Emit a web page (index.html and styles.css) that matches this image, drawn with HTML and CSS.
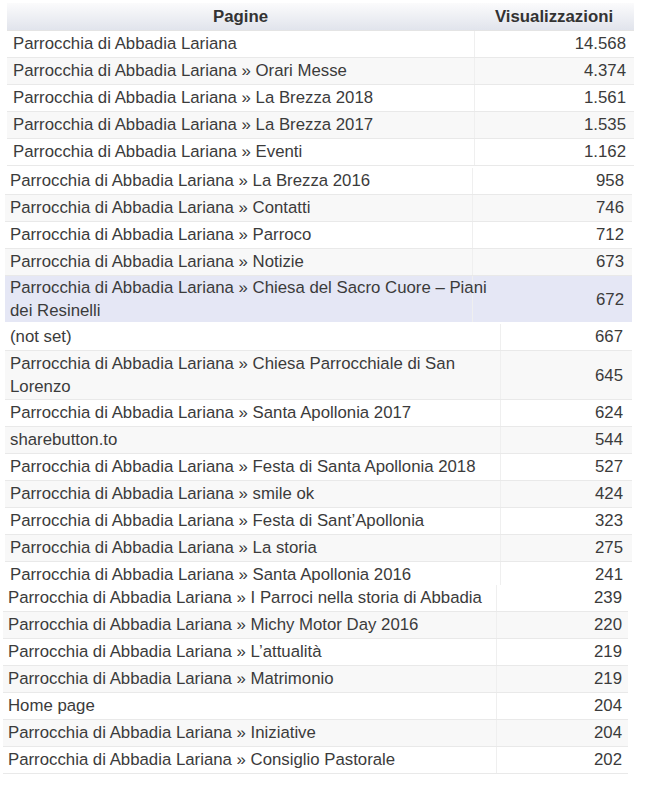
FILE: index.html
```html
<!DOCTYPE html>
<html lang="it">
<head>
<meta charset="utf-8">
<title>Pagine più visualizzate</title>
<link rel="stylesheet" href="styles.css">
</head>
<body>
<div class="page">
  <table class="t t1">
    <thead>
      <tr><th class="name">Pagine</th><th class="num">Visualizzazioni</th></tr>
    </thead>
    <tbody>
      <tr><td class="name">Parrocchia di Abbadia Lariana</td><td class="num">14.568</td></tr>
      <tr><td class="name">Parrocchia di Abbadia Lariana » Orari Messe</td><td class="num">4.374</td></tr>
      <tr><td class="name">Parrocchia di Abbadia Lariana » La Brezza 2018</td><td class="num">1.561</td></tr>
      <tr><td class="name">Parrocchia di Abbadia Lariana » La Brezza 2017</td><td class="num">1.535</td></tr>
      <tr><td class="name">Parrocchia di Abbadia Lariana » Eventi</td><td class="num">1.162</td></tr>
    </tbody>
  </table>
  <div class="clip2">
  <table class="t t2">
    <tbody>
      <tr><td class="name">Parrocchia di Abbadia Lariana » La Brezza 2016</td><td class="num">958</td></tr>
      <tr><td class="name">Parrocchia di Abbadia Lariana » Contatti</td><td class="num">746</td></tr>
      <tr><td class="name">Parrocchia di Abbadia Lariana » Parroco</td><td class="num">712</td></tr>
      <tr><td class="name">Parrocchia di Abbadia Lariana » Notizie</td><td class="num">673</td></tr>
      <tr class="hl"><td class="name">Parrocchia di Abbadia Lariana » Chiesa del Sacro Cuore – Piani<br>dei Resinelli</td><td class="num">672</td></tr>
    </tbody>
  </table>
  </div>
  <div class="clip3">
  <table class="t t3">
    <tbody>
      <tr><td class="name">(not set)</td><td class="num">667</td></tr>
      <tr class="two"><td class="name">Parrocchia di Abbadia Lariana » Chiesa Parrocchiale di San<br>Lorenzo</td><td class="num">645</td></tr>
      <tr><td class="name">Parrocchia di Abbadia Lariana » Santa Apollonia 2017</td><td class="num">624</td></tr>
      <tr><td class="name">sharebutton.to</td><td class="num">544</td></tr>
      <tr><td class="name">Parrocchia di Abbadia Lariana » Festa di Santa Apollonia 2018</td><td class="num">527</td></tr>
      <tr><td class="name">Parrocchia di Abbadia Lariana » smile ok</td><td class="num">424</td></tr>
      <tr><td class="name">Parrocchia di Abbadia Lariana » Festa di Sant’Apollonia</td><td class="num">323</td></tr>
      <tr><td class="name">Parrocchia di Abbadia Lariana » La storia</td><td class="num">275</td></tr>
      <tr><td class="name">Parrocchia di Abbadia Lariana » Santa Apollonia 2016</td><td class="num">241</td></tr>
    </tbody>
  </table>
  </div>
  <table class="t t4">
    <tbody>
      <tr><td class="name">Parrocchia di Abbadia Lariana » I Parroci nella storia di Abbadia</td><td class="num">239</td></tr>
      <tr><td class="name">Parrocchia di Abbadia Lariana » Michy Motor Day 2016</td><td class="num">220</td></tr>
      <tr><td class="name">Parrocchia di Abbadia Lariana » L’attualità</td><td class="num">219</td></tr>
      <tr><td class="name">Parrocchia di Abbadia Lariana » Matrimonio</td><td class="num">219</td></tr>
      <tr><td class="name">Home page</td><td class="num">204</td></tr>
      <tr><td class="name">Parrocchia di Abbadia Lariana » Iniziative</td><td class="num">204</td></tr>
      <tr><td class="name">Parrocchia di Abbadia Lariana » Consiglio Pastorale</td><td class="num">202</td></tr>
    </tbody>
  </table>
</div>
</body>
</html>
```

FILE: styles.css
```css
html, body {
  margin: 0;
  padding: 0;
  background: #ffffff;
}

.page {
  padding-top: 3px;
  font-family: "Liberation Sans", Arial, sans-serif;
  font-size: 16.8px;
  color: #3b3b3b;
}

.t {
  border-collapse: collapse;
  table-layout: fixed;
}

.t td {
  line-height: 22px;
  padding: 2px 8px 2px 5px;
  border-bottom: 1px solid #e9e9e9;
  white-space: nowrap;
  vertical-align: middle;
}

.t td.num {
  text-align: right;
  border-left: 1px solid #efefef;
}

.t tbody tr:nth-child(even) td {
  background: #f8f8f8;
}

.t th {
  font-weight: bold;
  text-align: center;
  color: #333;
  height: 27px;
  padding: 0;
  background: linear-gradient(#fbfbfc, #e1e4ec);
  border-bottom: 1px solid #e4e4e4;
}

.t1 {
  margin-left: 7px;
  width: 627px;
}
.t1 th.name { width: 467px; }
.t1 td.name { padding-left: 6px; }

.clip2 {
  margin-top: 2px;
  height: 156px;
  overflow: hidden;
}

.t2 {
  margin-left: 5px;
  width: 627px;
}
.t2 td.name { width: 454px; }

.t2 tr.hl td {
  background: #e5e7f5;
  line-height: 23px;
  padding-top: 0;
  padding-bottom: 0;
  border-bottom: none;
}

.clip3 {
  height: 261px;
  overflow: hidden;
}

.t3 {
  margin-left: 5px;
  width: 627px;
}
.t3 td.name { width: 482px; }
.t3 td.num { padding-right: 9px; }
.t3 tr.two td { line-height: 23px; padding-top: 1px; padding-bottom: 1px; }

.t4 {
  margin-left: 3px;
  width: 625px;
}
.t4 td.name { width: 480px; }
.t4 td.num { padding-right: 6px; }
```
